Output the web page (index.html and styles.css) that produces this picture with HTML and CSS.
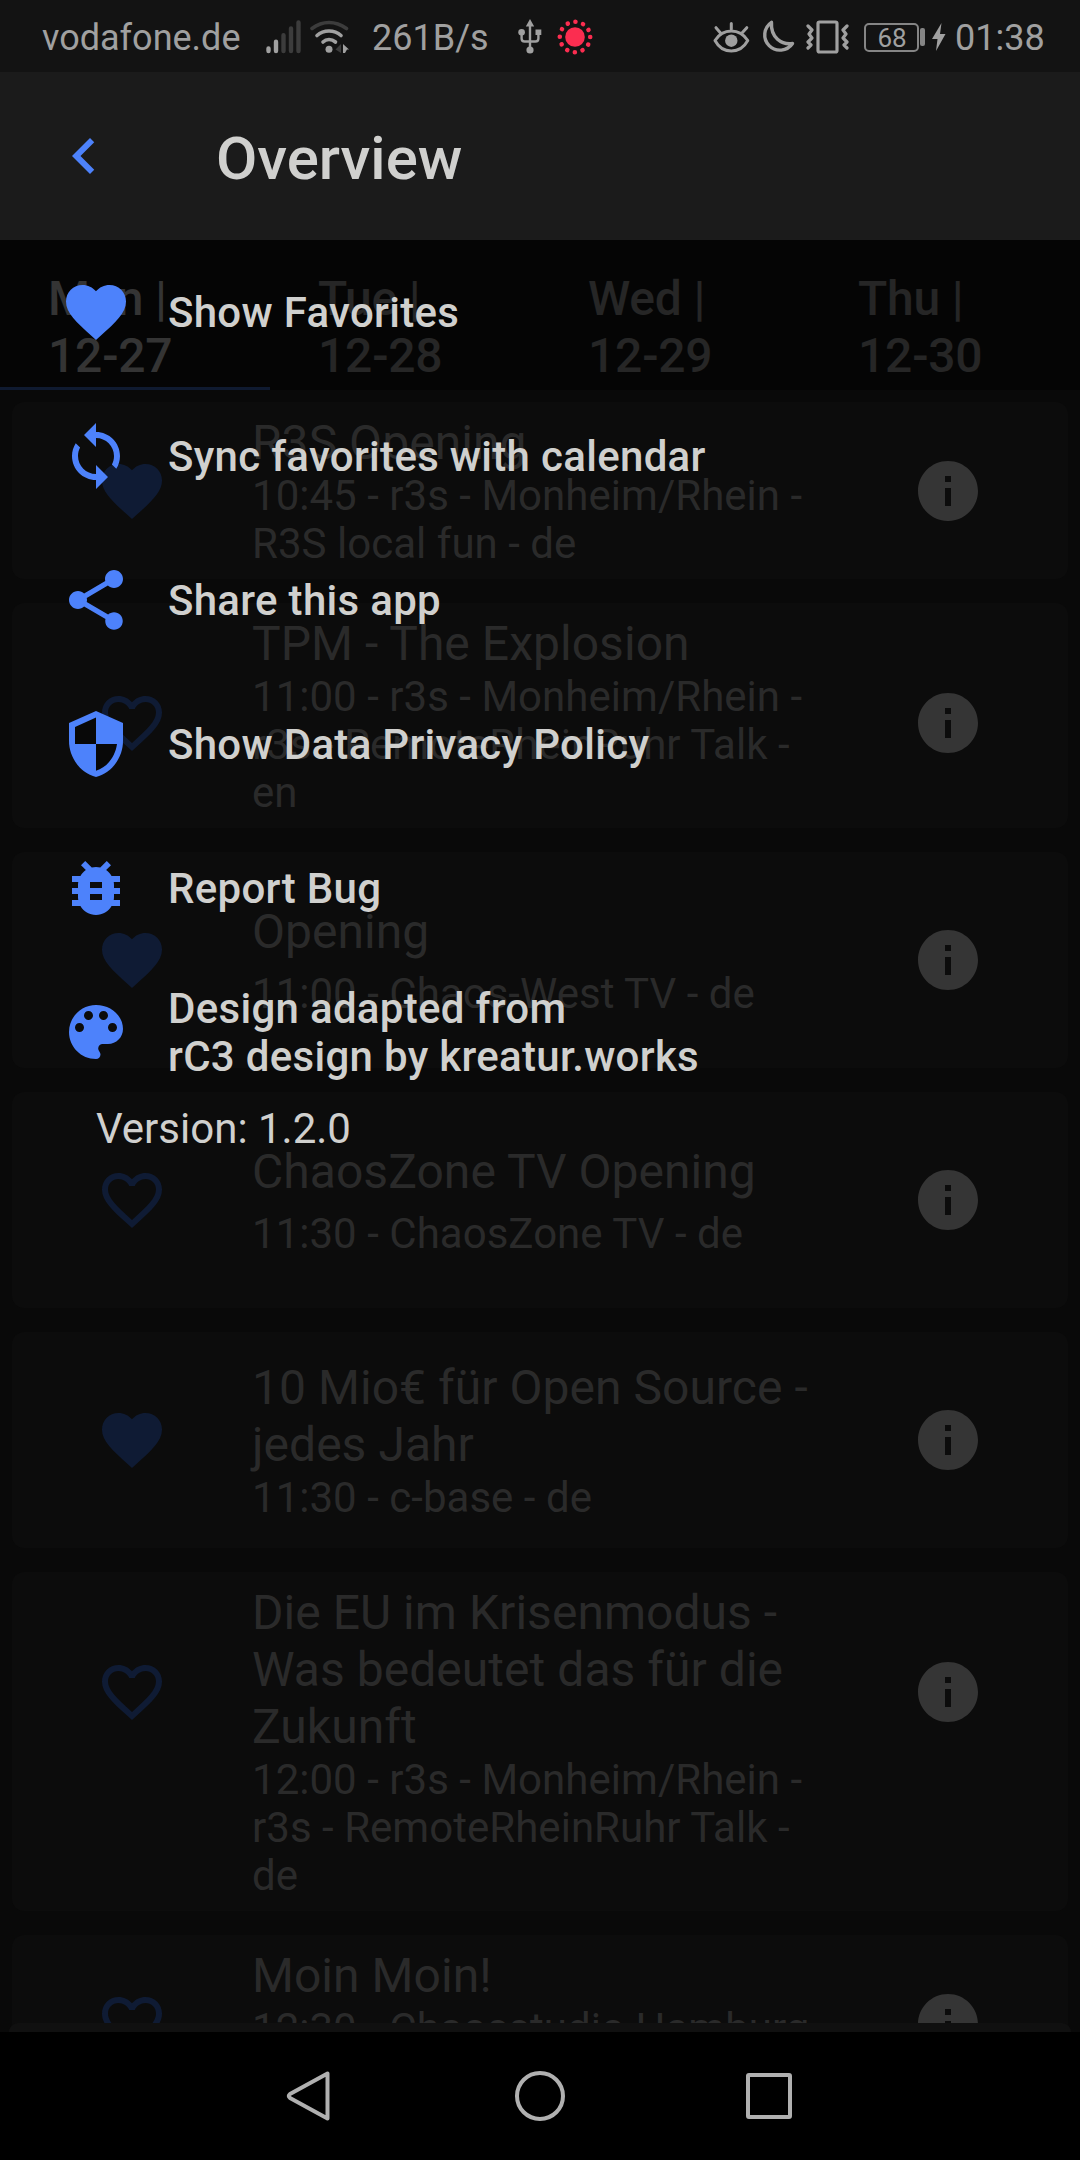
FILE: index.html
```html
<!DOCTYPE html>
<html lang="en">
<head>
<meta charset="utf-8">
<title>Overview</title>
<link rel="stylesheet" href="styles.css">
</head>
<body>
<svg class="defs" width="0" height="0" aria-hidden="true">
  <symbol id="heart" viewBox="0 0 24 24"><path d="M12 21.35l-1.45-1.32C5.4 15.36 2 12.28 2 8.5 2 5.42 4.42 3 7.5 3c1.74 0 3.41.81 4.5 2.09C13.09 3.81 14.76 3 16.5 3 19.58 3 22 5.42 22 8.5c0 3.78-3.4 6.86-8.55 11.54L12 21.35z"/></symbol>
  <symbol id="heart-line" viewBox="0 0 24 24"><path d="M16.5 3c-1.74 0-3.41.81-4.5 2.09C10.91 3.81 9.24 3 7.5 3 4.42 3 2 5.42 2 8.5c0 3.78 3.4 6.86 8.55 11.54L12 21.35l1.45-1.32C18.6 15.36 22 12.28 22 8.5 22 5.42 19.58 3 16.5 3zm-4.4 15.55l-.1.1-.1-.1C7.14 14.24 4 11.39 4 8.5 4 6.5 5.5 5 7.5 5c1.54 0 3.04.99 3.57 2.36h1.87C13.46 5.99 14.96 5 16.5 5c2 0 3.5 1.5 3.5 3.5 0 2.89-3.14 5.74-7.9 10.05z"/></symbol>
  <symbol id="info" viewBox="0 0 24 24"><path d="M12 2C6.48 2 2 6.48 2 12s4.48 10 10 10 10-4.48 10-10S17.52 2 12 2zm1 15h-2v-6h2v6zm0-8h-2V7h2v2z"/></symbol>
</svg>
<div class="phone">
  <div class="status">
    <div class="status-left">
      <span class="carrier">vodafone.de</span>
      <svg class="signal" width="36" height="34" viewBox="0 0 36 34" stroke-width="4.4" stroke-linecap="round"><g class="on"><path d="M2.5 28.5V31M10 21.8V31"/></g><g class="off"><path d="M17.5 15.2V31M25 8.5V31M32.5 2.5V31"/></g></svg>
      <svg class="wifi" width="40" height="34" viewBox="0 0 40 34" fill="none" stroke-width="3.6" stroke-linecap="round"><path class="off" d="M2 8.5Q10 2.5 19 2.5T36.5 8.5"/><g class="on"><path d="M7 15.5Q12 11 19 11T31 15.5M13 22Q15.5 19.5 19 19.5T25.5 22"/></g><circle class="dot" cx="19" cy="29.3" r="3.5"/><path class="dim" d="M25.5 29.5L31 24v9z"/><path class="dot" d="M33 24l6 5.5h-2l-2 3.5h-2z"/></svg>
      <span class="speed">261B/s</span>
      <svg class="usb" width="24" height="36" viewBox="0 0 24 36"><path class="dot" d="M12 0l4.2 7.5H7.8zM17.5 10.5h5.8v5.6h-5.8z"/><circle class="dot" cx="3.6" cy="13.300" r="3.300"/><circle class="dot" cx="12" cy="31" r="3.6"/><path class="on" fill="none" stroke-width="2.4" d="M12 5v24M3.6 14v5.5q0 3 3 3h10.8q3 0 3-3V14"/></svg>
      <svg class="virus" width="36" height="36" viewBox="-18 -18 36 36"><circle r="9.8"/><circle class="ring" r="15.2"/></svg>
    </div>
    <div class="status-right">
      <svg class="eye" width="37" height="34" viewBox="0 0 37 34"><path class="on" fill="none" stroke-width="3" stroke-linecap="round" stroke-linejoin="round" d="M2 20.5Q8 11 18.3 11T34.8 20.5Q29 31 18.3 31T2 20.5zM18.3 9V3.5M7.5 13L3 7.7M29 13l4.8-5.3"/><circle class="dot" cx="18.3" cy="20.7" r="6.2"/></svg>
      <svg class="moon" width="34" height="34" viewBox="0 0 34 34"><path class="on" fill="none" stroke-width="3.400" stroke-linejoin="round" d="M10.5 2.3A15.2 15.2 0 1 0 31.5 23.5C20.5 25 9.5 17.5 10.5 2.3z"/></svg>
      <svg class="vibrate" width="43" height="34" viewBox="0 0 43 34"><path class="on" fill="none" stroke-width="3.200" stroke-linecap="round" stroke-linejoin="round" d="M13.5 2h16q1.500 0 1.500 1.500v27q0 1.500-1.500 1.500h-16q-1.500 0-1.500-1.500v-27q0-1.500 1.500-1.500zM2 6l4 4-3 4 3 4-4 4 3 3-3 3M41 6l-4 4 3 4-3 4 4 4-3 3 3 3"/></svg>
      <span class="battery">68</span>
      <span class="nub"></span>
      <svg class="bolt" width="14" height="28" viewBox="0 0 14 28"><path class="dot" d="M9.500 0L0 16h5.500L4 28 13.500 11H8z"/></svg>
      <span class="clock">01:38</span>
    </div>
  </div>
  <header class="bar">
    <svg class="icon" viewBox="0 0 24 24"><path d="M15.41 7.41L14 6l-6 6 6 6 1.410-1.410L10.830 12z"/></svg>
    <h1>Overview</h1>
  </header>
  <main>
    <div class="tabs">
      <div class="tab active">Mon |<br>12-27</div>
      <div class="tab">Tue |<br>12-28</div>
      <div class="tab">Wed |<br>12-29</div>
      <div class="tab">Thu |<br>12-30</div>
    </div>
    <div class="list">
      <article class="card short"><svg class="icon fav"><use href="#heart"/></svg><div class="text"><h2>R3S Opening</h2><p>10:45 - r3s - Monheim/Rhein -<br>R3S local fun - de</p></div><svg class="icon info"><use href="#info"/></svg></article>
      <article class="card tall"><svg class="icon fav"><use href="#heart-line"/></svg><div class="text"><h2>TPM - The Explosion</h2><p>11:00 - r3s - Monheim/Rhein -<br>r3s - RemoteRheinRuhr Talk -<br>en</p></div><svg class="icon info"><use href="#info"/></svg></article>
      <article class="card fixed spaced"><svg class="icon fav"><use href="#heart"/></svg><div class="text"><h2>Opening</h2><p>11:00 - Chaos-West TV - de</p></div><svg class="icon info"><use href="#info"/></svg></article>
      <article class="card fixed spaced"><svg class="icon fav"><use href="#heart-line"/></svg><div class="text"><h2>ChaosZone TV Opening</h2><p>11:30 - ChaosZone TV - de</p></div><svg class="icon info"><use href="#info"/></svg></article>
      <article class="card fixed"><svg class="icon fav"><use href="#heart"/></svg><div class="text"><h2>10 Mio€ für Open Source -<br>jedes Jahr</h2><p>11:30 - c-base - de</p></div><svg class="icon info"><use href="#info"/></svg></article>
      <article class="card tall"><svg class="icon fav"><use href="#heart-line"/></svg><div class="text"><h2>Die EU im Krisenmodus -<br>Was bedeutet das für die<br>Zukunft</h2><p>12:00 - r3s - Monheim/Rhein -<br>r3s - RemoteRheinRuhr Talk -<br>de</p></div><svg class="icon info"><use href="#info"/></svg></article>
      <article class="card short"><svg class="icon fav"><use href="#heart-line"/></svg><div class="text"><h2>Moin Moin!</h2><p>12:30 - Chaosstudio Hamburg</p></div><svg class="icon info"><use href="#info"/></svg></article>
    </div>
    <div class="sheet"></div>
    <nav class="menu">
      <a><svg class="icon"><use href="#heart"/></svg><span>Show Favorites</span></a>
      <a><svg class="icon" viewBox="0 0 24 24"><path d="M12 4V1L8 5l4 4V6c3.310 0 6 2.690 6 6 0 1.010-.25 1.970-.7 2.800l1.460 1.460C19.540 15.030 20 13.570 20 12c0-4.420-3.580-8-8-8zm0 14c-3.310 0-6-2.690-6-6 0-1.010.25-1.970.7-2.800L5.240 7.740C4.460 8.970 4 10.430 4 12c0 4.420 3.580 8 8 8v3l4-4-4-4v3z"/></svg><span>Sync favorites with calendar</span></a>
      <a><svg class="icon" viewBox="0 0 24 24"><path d="M18 16.080c-.76 0-1.440.3-1.960.77L8.910 12.700c.05-.23.09-.46.09-.7s-.04-.47-.09-.7l7.050-4.110c.54.5 1.250.81 2.040.81 1.660 0 3-1.340 3-3s-1.340-3-3-3-3 1.340-3 3c0 .24.04.47.09.7L8.040 9.810C7.500 9.310 6.790 9 6 9c-1.660 0-3 1.340-3 3s1.340 3 3 3c.79 0 1.500-.31 2.040-.81l7.120 4.160c-.05.21-.08.43-.08.65 0 1.610 1.310 2.920 2.920 2.920s2.920-1.310 2.920-2.920-1.310-2.920-2.920-2.920z"/></svg><span>Share this app</span></a>
      <a><svg class="icon" viewBox="0 0 24 24"><path d="M12 1L3 5v6c0 5.550 3.840 10.740 9 12 5.160-1.260 9-6.450 9-12V5l-9-4z"/><path class="shield-gap" d="M12 3.190V12H5V6.300zM12 12h7c-.53 4.120-3.280 7.790-7 8.940z"/></svg><span>Show Data Privacy Policy</span></a>
      <a><svg class="icon" viewBox="0 0 24 24"><path d="M20 8h-2.810c-.45-.78-1.070-1.450-1.820-1.960L17 4.410 15.590 3l-2.170 2.170C12.960 5.060 12.490 5 12 5c-.49 0-.96.06-1.410.17L8.410 3 7 4.410l1.620 1.630C7.880 6.550 7.260 7.220 6.810 8H4v2h2.090c-.05.33-.09.66-.09 1v1H4v2h2v1c0 .34.04.67.09 1H4v2h2.810c1.040 1.790 2.970 3 5.190 3s4.150-1.210 5.190-3H20v-2h-2.090c.05-.33.09-.66.09-1v-1h2v-2h-2v-1c0-.34-.04-.67-.09-1H20V8zm-6 8h-4v-2h4v2zm0-4h-4v-2h4v2z"/></svg><span>Report Bug</span></a>
      <a><svg class="icon" viewBox="0 0 24 24"><path d="M12 3c-4.970 0-9 4.030-9 9s4.030 9 9 9c.83 0 1.500-.67 1.500-1.500 0-.39-.15-.74-.39-1.010-.23-.26-.38-.61-.38-.99 0-.83.67-1.500 1.500-1.500H16c2.760 0 5-2.240 5-5 0-4.420-4.030-8-9-8zm-5.500 9c-.83 0-1.500-.67-1.500-1.500S5.670 9 6.500 9 8 9.670 8 10.500 7.330 12 6.500 12zm3-4C8.670 8 8 7.330 8 6.500S8.670 5 9.500 5s1.500.67 1.500 1.500S10.330 8 9.500 8zm5 0c-.83 0-1.500-.67-1.500-1.500S13.670 5 14.500 5s1.500.67 1.500 1.500S15.330 8 14.500 8zm3 4c-.83 0-1.500-.67-1.500-1.500S16.670 9 17.500 9s1.500.67 1.500 1.500-.67 1.500-1.500 1.500z"/></svg><span>Design adapted from<br>rC3 design by kreatur.works</span></a>
      <p class="version">Version: 1.2.0</p>
    </nav>
  </main>
  <footer class="navbar">
    <svg width="46" height="54" viewBox="0 0 46 54"><path d="M41.500 4.500v45L4 29q-2.500-2 0-4z"/></svg>
    <svg width="54" height="54" viewBox="0 0 54 54"><circle cx="27" cy="27" r="23"/></svg>
    <svg class="recent" width="50" height="54" viewBox="0 0 50 54"><rect x="4" y="6" width="42" height="42" rx="1"/></svg>
  </footer>
</div>
</body>
</html>
```
FILE: styles.css
```css
* { box-sizing: border-box; margin: 0; padding: 0; }
body { background: #000; font-family: Roboto, "Liberation Sans", sans-serif; width: 1080px; height: 2160px; overflow: hidden; }
.defs { position: absolute; }
.phone { display: grid; grid-template-rows: 72px 168px 1792px 128px; }
.icon { width: 72px; height: 72px; fill: #4d82fb; flex: none; }

.status { background: #131313; color: #a0a0a0; display: flex; justify-content: space-between; font-size: 36px; line-height: 72px; padding: 2px 37px 0 42px; height: 72px; overflow: hidden; }
.status-left, .status-right { display: flex; height: 70px; align-items: center; line-height: 70px; white-space: nowrap; }
.status svg { flex: none; display: block; }
.on { stroke: #a0a0a0; }
.off { stroke: #3c3c3c; }
.dot { fill: #a0a0a0; }
.dim { fill: #3c3c3c; }
.carrier, .speed, .clock { padding-top: 2px; }
.carrier { width: 224px; }
.wifi { margin-left: 8px; }
.speed { margin-left: 22px; width: 146px; }
.virus { margin-left: 15px; fill: #fb2d50; }
.ring { fill: none; stroke: #fb2d50; stroke-width: 4.6; stroke-linecap: round; stroke-dasharray: .01 7.949; }
.moon { margin-left: 11px; }
.vibrate { margin-left: 11px; }
.battery { margin-left: 15px; width: 55px; height: 29px; border: 2px solid #858585; border-radius: 5px; font-size: 26px; line-height: 26px; text-align: center; padding-left: 1px; }
.nub { margin-left: 1px; width: 5px; height: 18px; border-radius: 2px; background: #858585; }
.bolt { margin-left: 7px; }
.clock { margin-left: 9px; width: 88px; }

.bar { background: #1b1b1b; display: flex; align-items: center; padding-left: 48px; }
.bar h1 { margin: 5px 0 0 96px; font-size: 60px; font-weight: 500; line-height: 70px; color: #d0d0ce; }

main { position: relative; background: #090909; overflow: hidden; }
.tabs { display: grid; grid-template-columns: repeat(4, 270px); height: 150px; background: #050505; }
.tab { padding: 30px 0 0 48px; font-size: 48px; line-height: 57px; font-weight: 500; letter-spacing: -.2px; color: #262626; border-bottom: 3px solid transparent; }
.tab.active { color: #343434; border-bottom-color: #0f1a30; }
.list { display: flex; flex-direction: column; gap: 24px; padding: 12px; }
.card { flex: none; display: flex; padding: 12px 0; border-radius: 12px; background: #0c0c0c; }
.card .icon { margin: 0 84px; }
.card .fav { fill: #0f1b34; }
.card .info { fill: #353535; margin: 0 84px 0 0; }
.text { flex: 1; color: #2a2a2a; white-space: nowrap; }
.text h2 { font-size: 48px; line-height: 57px; font-weight: 400; letter-spacing: .04px; }
.text p { font-size: 42px; line-height: 48px; letter-spacing: .03px; padding-top: 1px; margin-bottom: -1px; }
.short .icon, .card.short .info { margin-top: 41px; }
.tall .icon, .card.tall .info { margin-top: 72px; }
.fixed { height: 216px; align-items: center; }
.spaced h2 { margin-bottom: 9px; }
.sheet { position: absolute; left: 9px; right: 9px; bottom: 0; height: 9px; background: #101010; border-radius: 14px 14px 0 0; }
.menu { position: absolute; inset: 0; color: #d0d0ce; font-size: 42px; line-height: 48px; }
.menu a { display: flex; align-items: center; gap: 36px; height: 144px; padding-left: 60px; font-weight: 500; letter-spacing: .3px; }
.menu span { padding-top: 2px; }
.shield-gap { fill: #080808; }
.version { padding: 1px 0 0 96px; }

.navbar { background: #000; display: flex; align-items: center; gap: 181px; padding-left: 286px; }
.navbar svg { fill: none; stroke: #b0b0b0; stroke-width: 4; stroke-linejoin: round; }
.navbar .recent { margin-left: -4px; }
```
